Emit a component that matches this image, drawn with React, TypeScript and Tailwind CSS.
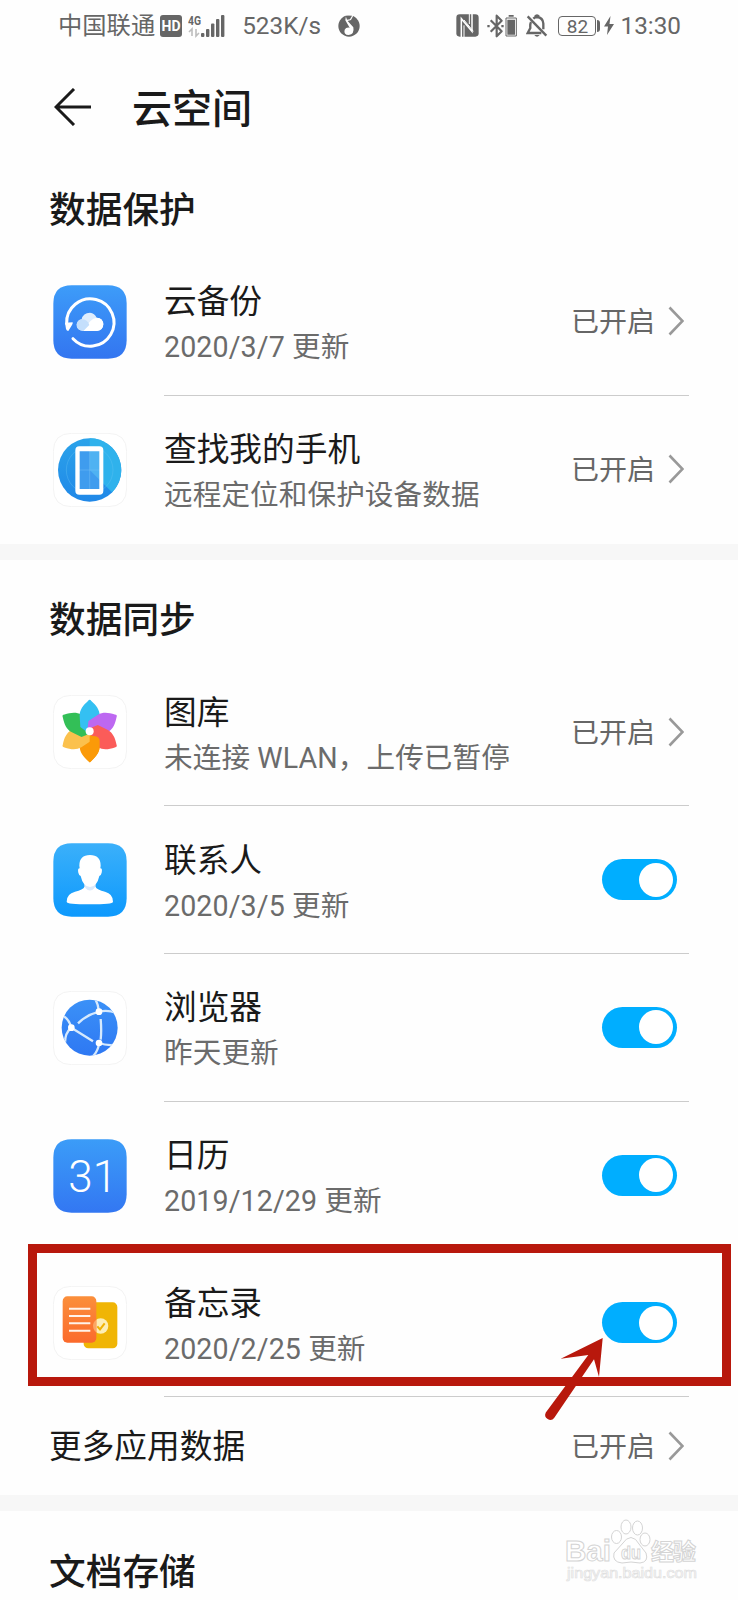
import type { ReactNode } from "react";

const GRAY = "#666666";

function HdIcon() {
  return (
    <svg className="ml-[5px] h-[22px] w-[22px]" viewBox="0 0 22 22">
      <rect width="22" height="22" rx="3" fill={GRAY} />
      <text x="11" y="16.2" textAnchor="middle" fontFamily="Roboto, sans-serif" fontWeight="700" fontSize="14.5" textLength="19" lengthAdjust="spacingAndGlyphs" fill="#fff">HD</text>
    </svg>
  );
}

function SignalIcon() {
  return (
    <svg className="ml-[6px] h-[24px] w-[37px]" viewBox="0 0 37 24">
      <text x="0" y="10.5" fontFamily="Roboto, sans-serif" fontWeight="700" fontSize="13" textLength="13" lengthAdjust="spacingAndGlyphs" fill={GRAY}>4G</text>
      <path d="M4 22V15L1 18M8 15v7l3-3" stroke="#bdbdbd" strokeWidth="1.6" fill="none" />
      <g fill={GRAY}>
        <rect x="13" y="19" width="3.4" height="4" rx="1" />
        <rect x="18" y="15" width="3.4" height="8" rx="1" />
        <rect x="23" y="9.5" width="3.4" height="13.5" rx="1" />
        <rect x="28" y="5" width="3.4" height="18" rx="1" />
        <rect x="33" y="1" width="3.4" height="22" rx="1" />
      </g>
    </svg>
  );
}

function MusicIcon() {
  return (
    <svg className="ml-[17px] h-[22px] w-[22px]" viewBox="0 0 66 66">
      <circle cx="33" cy="33" r="32" fill={GRAY} />
      <path d="M24 2L47 0 39 15 29 18 46 37Q50 58 32 60 16 59 20 44 24 36 35 38L22 16Z" fill="#fff" />
      <path d="M23 3L42 2 36 13 27 14Z" fill={GRAY} />
    </svg>
  );
}

function NfcIcon() {
  return (
    <svg className="h-[23px] w-[23px]" viewBox="0 0 69 69">
      <rect x="1" y="1" width="67" height="67" rx="10" fill={GRAY} />
      <path d="M16 69V14L48 52V0" fill="none" stroke="#fff" strokeWidth="4.5" />
      <path d="M24 69V34M24 18L52 52M40 0V30" fill="none" stroke="#fff" strokeWidth="3" />
    </svg>
  );
}

function BluetoothIcon() {
  return (
    <svg className="ml-[8px] h-[24px] w-[32px]" viewBox="0 0 96 72">
      <g fill="none" stroke={GRAY} strokeWidth="6.5" strokeLinejoin="round">
        <path d="M11 19L44 52 29 67V5L44 20 11 53" />
        <path d="M57 12h31v54H57z" strokeWidth="3" />
      </g>
      <path d="M61 17h23v45H61zM65 3h15v5H65zM1 33h7v7H1zM43 33h7v7h-7z" fill={GRAY} />
    </svg>
  );
}

function BellOffIcon() {
  return (
    <svg className="ml-[7px] h-[24px] w-[22px]" viewBox="0 0 66 72">
      <g fill="none" stroke={GRAY} strokeWidth="7">
        <path d="M5 7L61 65" />
        <path d="M15 24Q12 30 13 42L5 57H46M22 14Q27 9 33 9 51 11 52 29V46M27 8Q33 0 39 8" />
      </g>
      <path d="M25 63h16q-8 10-16 0z" fill={GRAY} />
    </svg>
  );
}

function StatusBattery() {
  return (
    <div className="ml-[10px] flex items-center">
      <div className="flex h-[20px] w-[38px] items-center justify-center rounded-[4px] border border-[#666] pt-px text-[19px] leading-none">82</div>
      <div className="ml-px h-[12px] w-[3px] rounded-r-sm bg-[#666]" />
      <svg className="ml-[4px] h-[19px] w-[10px]" viewBox="0 0 10 19">
        <path d="M6.5 0L0 10.5h4L3 19 10 8H5.5z" fill={GRAY} />
      </svg>
    </div>
  );
}

function StatusBar() {
  return (
    <div className="flex h-[51px] items-center pr-[57px] pl-[58px] text-[24.3px] text-[#666]">
      <span className="pt-[2px]">中国联通</span>
      <HdIcon />
      <SignalIcon />
      <span className="ml-[17px] pt-[2px]">523K/s</span>
      <MusicIcon />
      <div className="flex-1" />
      <NfcIcon />
      <BluetoothIcon />
      <BellOffIcon />
      <StatusBattery />
      <span className="ml-[6px] pt-[2px]">13:30</span>
    </div>
  );
}

function Tile({ children, from, to }: { children: ReactNode; from?: string; to?: string }) {
  const id = from ? "tile" + from.slice(1) : "";
  return (
    <svg className="h-[74px] w-[74px] shrink-0" viewBox="0 0 222 222">
      {from && (
        <defs>
          <linearGradient id={id} x1="0" y1="0" x2="0" y2="1">
            <stop offset="0" stopColor={from} />
            <stop offset="1" stopColor={to} />
          </linearGradient>
        </defs>
      )}
      <path
        d="M56 1H165Q221 1 221 56V165Q221 221 165 221H56Q1 221 1 165V56Q1 1 56 1Z"
        fill={from ? `url(#${id})` : "#fff"}
        stroke={from ? "none" : "#f3f3f3"}
        strokeWidth="3"
      />
      {children}
    </svg>
  );
}

function BackupIcon() {
  return (
    <Tile from="#3d9cf9" to="#3375f0">
      <path d="M41 116A71 71 0 1 1 60 161" fill="none" stroke="#fff" strokeWidth="9" strokeLinecap="round" />
      <path d="M36 113L59 112Q60 116 57 120L46 138Q41 138 39 132Z" fill="#fff" />
      <path d="M91 138Q70 136 71 118 74 104 86 103 90 83 111 83 125 85 131 98 150 99 151 118 150 136 132 138Z" fill="#dfedfd" />
      <path d="M91 138Q112 99 131 98 150 99 151 118 150 136 132 138Z" fill="#fff" />
      <path d="M91 138Q70 136 71 118 74 104 86 103 104 103 109 120Z" fill="#c4dffc" />
    </Tile>
  );
}

function FindPhoneIcon() {
  return (
    <Tile>
      <defs>
        <linearGradient id="radar" x1="0" y1="0" x2="0" y2="1">
          <stop offset="0" stopColor="#2ba3ea" />
          <stop offset="1" stopColor="#2088e8" />
        </linearGradient>
      </defs>
      <circle cx="110" cy="111" r="95" fill="url(#radar)" />
      <path d="M110 111L110 16A95 95 0 0 1 177 178Z" fill="#2fb2ec" />
      <circle cx="110" cy="111" r="70" fill="none" stroke="#67c3f4" strokeWidth="1.5" opacity=".7" />
      <rect x="74" y="47" width="70" height="131" rx="6" fill="#3f9cee" />
      <path d="M110 111V50H141V142Z" fill="#4fb2f2" />
      <path d="M110 50V175M78 111H141" stroke="#73bdf5" strokeWidth="1.5" />
      <path d="M79 40H139Q151 40 151 52V173Q151 185 139 185H79Q67 185 67 173V52Q67 40 79 40ZM80 55V168H139V55Z" fill="#fff" fillRule="evenodd" />
    </Tile>
  );
}

const PETAL = "M105 18Q110 11 115 18C130 31 140 45 140 62V84Q126 86 118 100L106 114 82 96 80 62C80 45 90 31 105 18Z";

function GalleryIcon() {
  return (
    <Tile>
      <path d={PETAL} fill="#fb9a08" transform="rotate(180 110 108)" />
      <path d={PETAL} fill="#fbc14d" transform="rotate(240 110 108)" />
      <path d={PETAL} fill="#33bf57" transform="rotate(300 110 108)" />
      <path d={PETAL} fill="#34c0f2" />
      <path d={PETAL} fill="#bd68f1" transform="rotate(60 110 108)" />
      <path d={PETAL} fill="#fb5c59" transform="rotate(120 110 108)" />
      <path d="M110 119Q116 124 128 124 140 128 140 138V154C140 171 130 185 115 198L110 203V119Z" fill="#fb9a08" />
      <circle cx="110" cy="109" r="12" fill="#fff" />
    </Tile>
  );
}

function ContactsIcon() {
  return (
    <Tile from="#3bb0fa" to="#0d99fd">
      <path d="M94 120H128V142Q111 155 94 142Z" fill="#dceafb" />
      <path d="M111 36Q143 36 143 68L142 76Q149 76 146 89 144 98 139 99 132 131 111 132 90 131 83 99 78 98 76 89 73 76 80 76L79 68Q79 36 111 36Z" fill="#fff" />
      <path d="M41 176Q41 152 66 146 90 140 95 131 111 154 127 131 132 140 156 146 180 152 180 176 180 184 110 184 41 184 41 176Z" fill="#fff" />
    </Tile>
  );
}

function BrowserIcon() {
  return (
    <Tile>
      <defs>
        <linearGradient id="globe" x1="0" y1="0" x2="0" y2="1">
          <stop offset="0" stopColor="#3b91f7" />
          <stop offset="1" stopColor="#2e78f3" />
        </linearGradient>
        <clipPath id="globe-clip"><circle cx="110" cy="110" r="84" /></clipPath>
      </defs>
      <circle cx="110" cy="110" r="84" fill="url(#globe)" />
      <g clipPath="url(#globe-clip)" fill="none" stroke="#d5e9fd" strokeWidth="7">
        <path d="M125 20Q136 40 138 62M138 62Q165 56 190 66M138 62Q100 72 75 97M55 110Q48 85 32 76M55 110Q36 126 36 155M55 110L120 151M143 146Q146 120 143 84M138 156Q165 166 195 160M138 156Q136 180 118 198" />
      </g>
      <g fill="#fff">
        <circle cx="138" cy="62" r="10" />
        <circle cx="55" cy="110" r="10" />
        <circle cx="138" cy="156" r="10" />
      </g>
    </Tile>
  );
}

function CalendarIcon() {
  return (
    <Tile from="#3b9cf8" to="#3377f2">
      <text x="119" y="158" textAnchor="middle" fontFamily="Roboto, sans-serif" fontWeight="300" fontSize="132" fill="#fff">31</text>
    </Tile>
  );
}

function NotesIcon() {
  return (
    <Tile>
      <defs>
        <linearGradient id="note" x1="0" y1="0" x2="0" y2="1">
          <stop offset="0" stopColor="#fb8f3b" />
          <stop offset="1" stopColor="#fb6a2c" />
        </linearGradient>
      </defs>
      <rect x="92" y="49" width="101" height="138" rx="14" fill="#f0b505" />
      <circle cx="143" cy="120" r="23" fill="#fdeeb5" />
      <path d="M133 121L141 130 155 112" fill="none" stroke="#efb204" strokeWidth="6" />
      <rect x="29" y="31" width="101" height="139" rx="14" fill="url(#note)" />
      <path d="M120 120A23 23 0 0 1 130 101V139Q121 133 120 120Z" fill="#fba764" />
      <path d="M48 68H112M48 90H112M48 112H112M48 134H112" stroke="#fff3ea" strokeWidth="6" />
    </Tile>
  );
}

function Toggle() {
  return (
    <button role="switch" aria-checked="true" className="mr-[12px] flex h-[41px] w-[75px] items-center justify-end rounded-full bg-[#00aeff] pr-[4px]">
      <span className="h-[34px] w-[34px] rounded-full bg-white" />
    </button>
  );
}

function Enabled() {
  return (
    <div className="mr-[5px] flex items-center text-[28px] text-[#666]">
      <span className="pt-[4px]">已开启</span>
      <svg className="ml-[13px] h-[30px] w-[16px]" viewBox="0 0 16 30">
        <path d="M1.5 1.5L14.5 15 1.5 28.5" fill="none" stroke="#999" strokeWidth="2.6" />
      </svg>
    </div>
  );
}

type RowProps = { icon: ReactNode; title: string; sub: string; toggle?: boolean; last?: boolean };

function Row({ icon, title, sub, toggle, last }: RowProps) {
  return (
    <div className="flex h-[147.75px] pr-[49px] pl-[53px]">
      <div className="flex items-center">{icon}</div>
      <div className={"ml-[37px] flex flex-1 items-center justify-between border-b " + (last ? "border-transparent" : "border-[#cccccc]")}>
        <div className="pt-[8px]">
          <div className="text-[32.7px] leading-[44px] text-[#1a1a1a]">{title}</div>
          <div className="text-[28.6px] leading-[46px] tracking-[0.1px] text-[#6b6b6b]">{sub}</div>
        </div>
        {toggle ? <Toggle /> : <Enabled />}
      </div>
    </div>
  );
}

function SectionTitle({ children }: { children: ReactNode }) {
  return <h2 className="flex items-center pt-[24px] pl-[49px] text-[36.7px] font-medium text-[#1a1a1a]">{children}</h2>;
}

function Watermark() {
  return (
    <svg className="absolute top-[1518px] left-[564px] h-[70px] w-[140px]" viewBox="0 0 140 70">
      <g fill="#fff" stroke="#d4d4d4" strokeWidth="1">
        <text x="1" y="43" fontFamily="Liberation Sans, sans-serif" fontWeight="700" fontSize="29" textLength="46" lengthAdjust="spacingAndGlyphs">Bai</text>
        <ellipse cx="52.5" cy="19" rx="5" ry="6.5" />
        <ellipse cx="62" cy="9" rx="5" ry="7" />
        <ellipse cx="73.5" cy="10" rx="5" ry="7" />
        <ellipse cx="81" cy="21.5" rx="5" ry="6.5" />
        <path d="M67 19.5Q72 20 75 26L82 35Q85 44 76 45 67 43 58 45 48 44 50 35L59 25Q62 20 67 19.5Z" />
        <text x="57" y="41" fontFamily="Liberation Sans, sans-serif" fontWeight="700" fontSize="19" textLength="20" lengthAdjust="spacingAndGlyphs">du</text>
        <text x="87" y="41.5" fontFamily="Noto Sans CJK SC, sans-serif" fontWeight="700" fontSize="23" textLength="45">经验</text>
      </g>
      <text x="3" y="60" fontFamily="Liberation Sans, sans-serif" fontSize="15.5" textLength="130" lengthAdjust="spacingAndGlyphs" fill="#fdfdfd" stroke="#e0e0e0" strokeWidth=".7">jingyan.baidu.com</text>
    </svg>
  );
}

export default function App() {
  return (
    <div className="relative h-[1600px] w-[738px] overflow-hidden bg-[#fefefe] font-['Roboto','Noto_Sans_CJK_SC',sans-serif]">
      <StatusBar />
      <header className="flex h-[99px] items-center pb-[1px] pl-[54px]">
        <svg className="mt-[14px] h-[38px] w-[38px]" viewBox="0 0 38 38">
          <path d="M20 1L2 19 20 37M2 19H37" fill="none" stroke="#1a1a1a" strokeWidth="3" />
        </svg>
        <h1 className="mt-[19px] ml-[40px] text-[40px] font-medium text-[#1a1a1a]">云空间</h1>
      </header>
      <section className="grid grid-rows-[98px]">
        <SectionTitle>数据保护</SectionTitle>
        <Row icon={<BackupIcon />} title="云备份" sub="2020/3/7 更新" />
        <Row icon={<FindPhoneIcon />} title="查找我的手机" sub="远程定位和保护设备数据" last />
      </section>
      <div className="h-[16px] bg-[#f7f7f7]" />
      <section className="grid grid-rows-[99px]">
        <SectionTitle>数据同步</SectionTitle>
        <Row icon={<GalleryIcon />} title="图库" sub="未连接 WLAN，上传已暂停" />
        <Row icon={<ContactsIcon />} title="联系人" sub="2020/3/5 更新" toggle />
        <Row icon={<BrowserIcon />} title="浏览器" sub="昨天更新" toggle />
        <Row icon={<CalendarIcon />} title="日历" sub="2019/12/29 更新" toggle />
        <Row icon={<NotesIcon />} title="备忘录" sub="2020/2/25 更新" toggle />
        <div className="flex h-[98px] items-center justify-between pr-[49px] pl-[49px]">
          <span className="pt-[2px] text-[32.7px] text-[#1a1a1a]">更多应用数据</span>
          <Enabled />
        </div>
      </section>
      <div className="h-[16px] bg-[#f7f7f7]" />
      <section className="grid grid-rows-[98px]">
        <SectionTitle>文档存储</SectionTitle>
      </section>
      <div className="absolute top-[1244px] left-[28px] h-[142px] w-[703px] border-[9px] border-[#b8180c]" />
      <svg className="absolute top-[1334px] left-[540px] h-[90px] w-[70px]" viewBox="540 1334 70 90">
        <path d="M602.7 1338L599 1377 594 1359.3 554.3 1417.8A5 5 0 0 1 545.8 1412.6L588.3 1355 560.7 1358.7Z" fill="#b8180c" />
      </svg>
      <Watermark />
    </div>
  );
}
